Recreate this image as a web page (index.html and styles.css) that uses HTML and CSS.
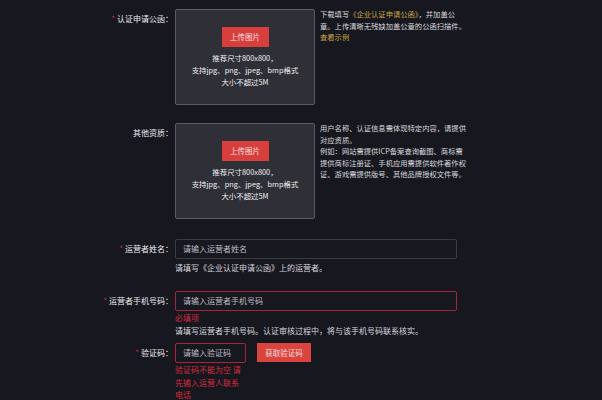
FILE: index.html
```html
<!DOCTYPE html>
<html lang="zh">
<head>
<meta charset="utf-8">
<link rel="stylesheet" href="styles.css">
</head>
<body>
<div class="form">
  <div class="row row-upload">
    <div class="label"><span class="star">*</span>认证申请公函：</div>
    <div class="upload">
      <div class="btn-upload">上传图片</div>
      <div class="upload-tip">推荐尺寸800x800，<br>支持jpg、png、jpeg、bmp格式<br>大小不超过5M</div>
    </div>
    <div class="side">下载填写<span class="gold">《企业认证申请公函》</span>，并加盖公<br>章。上传清晰无残缺加盖公章的公函扫描件。<br><span class="gold">查看示例</span></div>
  </div>
  <div class="row row-upload row-other">
    <div class="label">其他资质：</div>
    <div class="upload">
      <div class="btn-upload">上传图片</div>
      <div class="upload-tip">推荐尺寸800x800，<br>支持jpg、png、jpeg、bmp格式<br>大小不超过5M</div>
    </div>
    <div class="side">用户名称、认证信息需体现特定内容，请提供<br>对应资质。<br>例如：网站需提供ICP备案查询截图、商标需<br>提供商标注册证、手机应用需提供软件著作权<br>证、游戏需提供版号、其他品牌授权文件等。</div>
  </div>
  <div class="row row-name">
    <div class="label"><span class="star">*</span>运营者姓名：</div>
    <div class="field">
      <div class="input">请输入运营者姓名</div>
      <div class="hint">请填写《企业认证申请公函》上的运营者。</div>
    </div>
  </div>
  <div class="row row-phone">
    <div class="label"><span class="star">*</span>运营者手机号码：</div>
    <div class="field">
      <div class="input input-error">请输入运营者手机号码</div>
      <div class="error">必填项</div>
      <div class="hint">请填写运营者手机号码。认证审核过程中，将与该手机号码联系核实。</div>
    </div>
  </div>
  <div class="row row-code">
    <div class="label"><span class="star">*</span>验证码：</div>
    <div class="field">
      <div class="code-line">
        <div class="code-col">
          <div class="input input-error input-code">请输入验证码</div>
          <div class="error error-code">验证码不能为空 请先输入运营人联系电话</div>
        </div>
        <div class="btn-code">获取验证码</div>
      </div>
    </div>
  </div>
</div>
</body>
</html>
```
FILE: styles.css
```css
* { box-sizing: border-box; }
html, body {
  margin: 0;
  padding: 0;
  background: #16171f;
  height: 100%;
  overflow: hidden;
}
body {
  font-family: "Noto Sans CJK SC", "Noto Sans", sans-serif;
  color: #d4d4d8;
}
.form {
  padding-top: 9px;
}
.row {
  display: flex;
  align-items: flex-start;
}
.label {
  width: 175px;
  flex: none;
  text-align: right;
  padding-right: 2px;
  font-size: 8px;
  line-height: 20px;
  color: #ececf0;
  white-space: nowrap;
}
.star {
  color: #d0283f;
  margin-right: 2px;
}
.upload {
  width: 140px;
  height: 96px;
  flex: none;
  background: #2e2f37;
  border: 1px solid #5c5d64;
  border-radius: 2px;
  display: flex;
  flex-direction: column;
  align-items: center;
  padding-top: 17px;
}
.btn-upload {
  width: 47px;
  height: 20px;
  background: #d83e3c;
  color: #f4e4e4;
  font-size: 7.5px;
  line-height: 20px;
  text-align: center;
}
.upload-tip {
  margin-top: 5px;
  font-size: 7.4px;
  line-height: 12px;
  text-align: center;
  color: #f0f0f4;
  white-space: nowrap;
}
.side {
  margin-left: 5px;
  font-size: 7.3px;
  line-height: 11.5px;
  color: #d8d8dc;
  white-space: nowrap;
}
.gold {
  color: #c9a445;
}
.row-other {
  margin-top: 18px;
}
.row-name {
  margin-top: 20px;
}
.field {
  display: flex;
  flex-direction: column;
}
.input {
  width: 282px;
  height: 20px;
  border: 1px solid #3a3b43;
  border-radius: 2px;
  background: #17181f;
  color: #bcbcc2;
  font-size: 8px;
  line-height: 18px;
  padding-left: 7px;
  white-space: nowrap;
}
.input-error {
  border-color: #a82536;
}
.hint {
  margin-top: 2px;
  font-size: 8px;
  line-height: 14px;
  color: #d8d8dc;
  white-space: nowrap;
}
.row-phone {
  margin-top: 16px;
}
.error {
  font-size: 8px;
  line-height: 12px;
  color: #d62c3c;
  margin-top: 1px;
}
.row-phone .hint {
  margin-top: 0;
}
.row-code {
  margin-top: 5px;
}
.code-line {
  display: flex;
  align-items: flex-start;
}
.code-col {
  width: 71px;
}
.input-code {
  width: 71px;
  padding-left: 7px;
}
.error-code {
  width: 71px;
  line-height: 12.5px;
}
.btn-code {
  margin-left: 11px;
  width: 54px;
  height: 19px;
  background: #d9443f;
  color: #f3dede;
  font-size: 7.5px;
  line-height: 19px;
  text-align: center;
}
```
